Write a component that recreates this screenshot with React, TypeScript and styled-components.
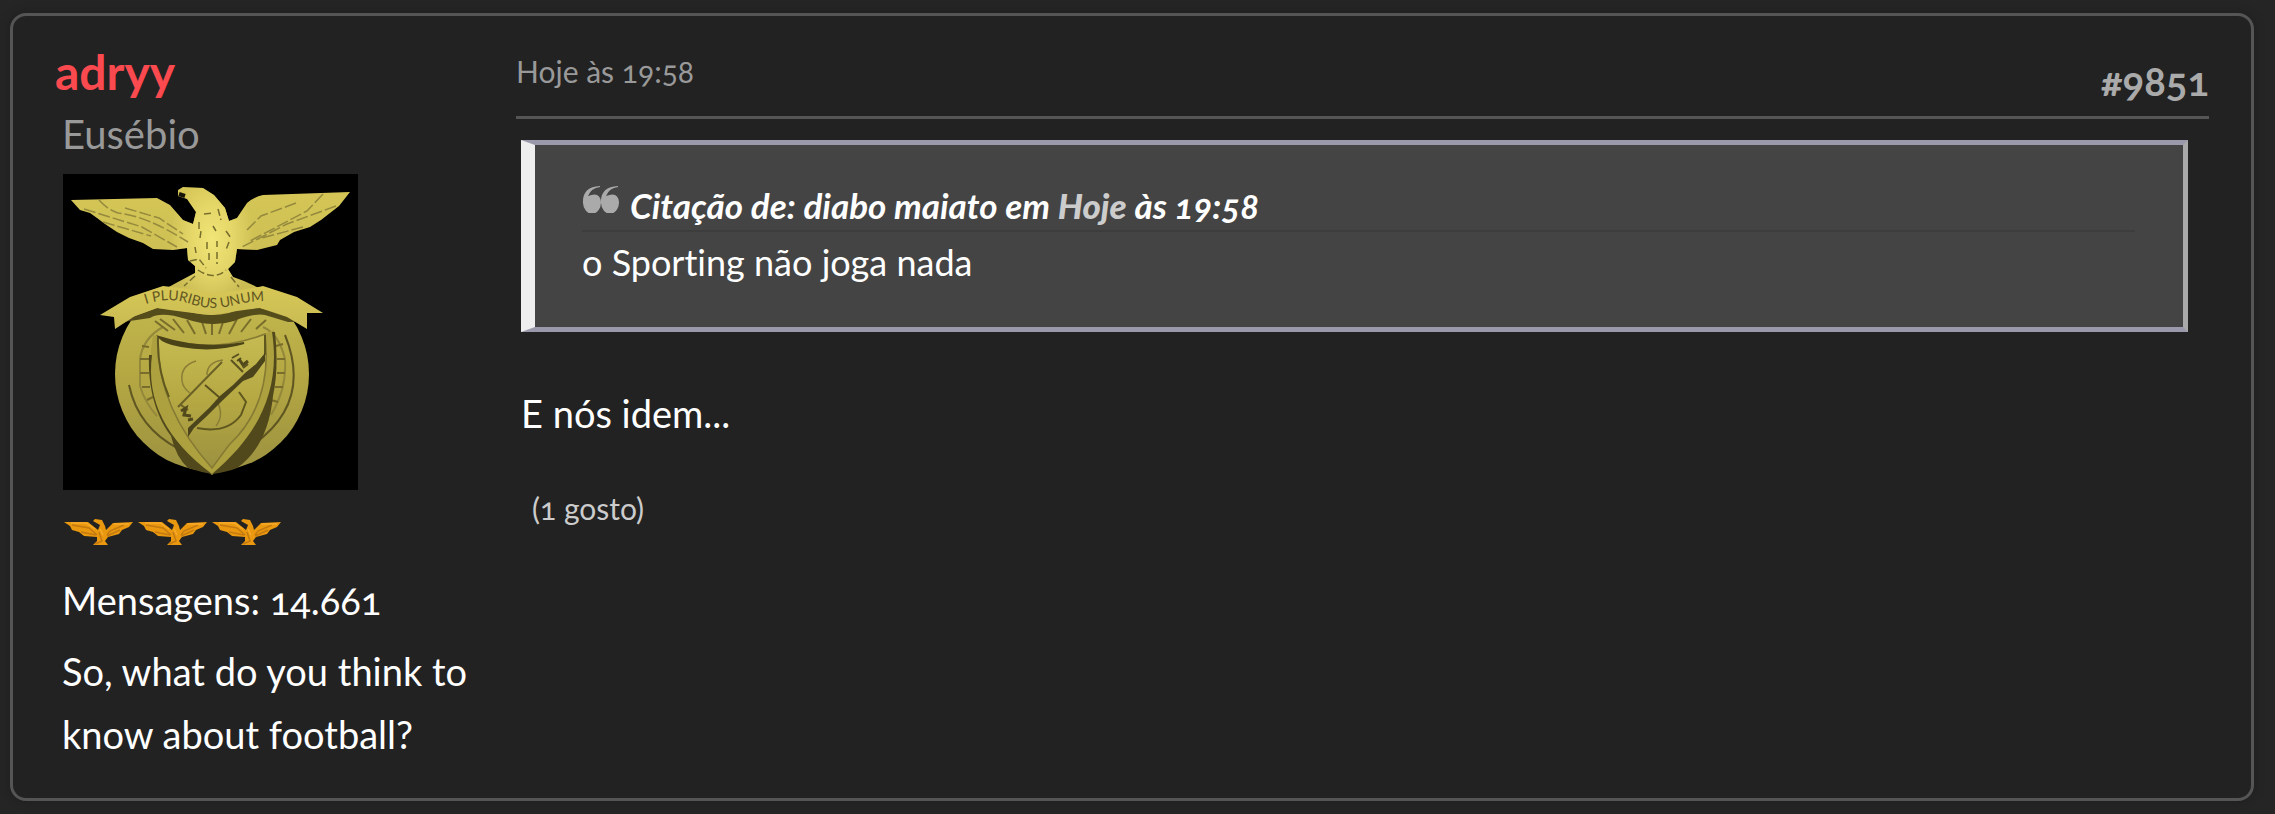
import React from 'react';
import styled, { createGlobalStyle } from 'styled-components';

const GlobalStyle = createGlobalStyle`
  * { box-sizing: border-box; }
  body {
    margin: 0;
    background: #252525;
    color: #fff;
    font-family: Lato, "Open Sans", sans-serif;
    font-variant-numeric: oldstyle-nums;
    font-variant-ligatures: none;
    font-size: 38px;
    line-height: 63px;
  }
  p, h2, h3, blockquote { margin: 0; }
  a { color: inherit; text-decoration: none; }
`;

const Post = styled.article`
  display: flex;
  min-height: 788px;
  margin: 13px 21px 13px 10px;
  padding: 24px 42px 30px;
  border: 3px solid #555;
  border-radius: 16px;
  background: #222;
  box-shadow: 0 0 12px rgba(0, 0, 0, 0.2);
`;

const Poster = styled.aside`
  flex: 0 0 461px;
`;

const PosterName = styled.h2`
  color: #fb4a4f;
  font-size: 48px;
  font-weight: 700;
  line-height: 64px;
`;

const PosterDetails = styled.div`
  padding-left: 7px;
`;

const Title = styled.p`
  color: #999;
  font-size: 40px;
  line-height: 60px;
`;

const Avatar = styled.svg`
  display: block;
  width: 295px;
  height: 316px;
  margin: 10px 0 0 1px;
  background: #000;
`;

const Rank = styled.div`
  display: flex;
  gap: 2px;
  margin: 28px 0 23px 1px;
`;

const RankIcon = styled.svg`
  width: 72px;
  height: 28px;
`;

const Blurb = styled.p`
  margin-top: 8px;
`;

const Content = styled.div`
  flex: 1;
  min-width: 0;
`;

const Header = styled.header`
  display: flex;
  justify-content: space-between;
  align-items: flex-start;
  height: 79px;
  border-bottom: 3px solid #555;
`;

const Posted = styled.a`
  color: #999;
  font-size: 30px;
  line-height: 62px;
`;

const PostNumber = styled.a`
  padding-top: 10px;
  color: #aaa;
  font-size: 40px;
  font-weight: 700;
`;

const Quote = styled.blockquote`
  margin: 21px 21px 0 5px;
  padding: 34px 48px 35px 47px;
  border-style: solid;
  border-width: 5px 5px 5px 14px;
  border-color: #9a99ab #a9a9a9 #9a99ab #eee;
  background: #444;
  font-size: 36px;
  line-height: 60px;
`;

const QuoteSource = styled.h3`
  display: flex;
  gap: 11px;
  height: 53px;
  border-bottom: 2px solid #3d3d3d;
  font-size: 35px;
  font-style: italic;
  font-weight: 700;
  line-height: 52px;
`;

const QuoteMark = styled.svg`
  width: 37px;
  height: 28px;
  margin-top: 6px;
  fill: #aaa;
`;

const Today = styled.strong`
  color: #ccc;
`;

const Body = styled.p`
  padding: 50px 5px 0;
`;

const Likes = styled.p`
  padding: 32px 16px 0;
  color: #ccc;
  font-size: 30px;
`;

const EagleCrest = () => (
  <Avatar viewBox="0 0 295 316" role="img" aria-label="Avatar de adryy">
    <defs>
      <linearGradient id="gold" x1="0" y1="0" x2="0" y2="1">
        <stop offset="0" stopColor="#d6c756" />
        <stop offset="1" stopColor="#c9bb53" />
      </linearGradient>
      <radialGradient id="breast" cx=".5" cy=".5" r=".5">
        <stop offset="0" stopColor="#f2e678" />
        <stop offset=".5" stopColor="#eadc6d" stopOpacity=".8" />
        <stop offset="1" stopColor="#eadc6d" stopOpacity="0" />
      </radialGradient>
      <linearGradient id="medal" x1="0" y1="0" x2="0" y2="1">
        <stop offset="0" stopColor="#c6bb52" />
        <stop offset=".5" stopColor="#b5a843" />
        <stop offset="1" stopColor="#9c9140" />
      </linearGradient>
      <clipPath id="eagle-outline">
        <path d="M8 26L94 24L107 31L120 46L130 50L133 38L124 25L115 22L115 16L120 13L140 14L151 21L162 34L166 47L174 44L184 29Q191 23 200 21L287 18L276 32L258 46L247 53L231 58L217 66L214 71L194 76L174 75L172 88L165 95L170 103L181 107L196 114L149 120L104 114L113 109L132 99L132 92L125 86L124 74L110 76L90 75L80 69L66 64L54 58L42 50L34 44L27 39L17 36Z" />
      </clipPath>
      <path id="motto" d="M75 133C115 117 125 134 150 134S185 121 232 131" />
    </defs>
    <circle cx="149" cy="200" r="97" fill="url(#medal)" />
    <g fill="none" stroke="#786d2b" strokeWidth="2">
      <path d="M66 211Q75 254 116 275M222 161Q250 230 188 272" stroke="#5f5621" />
      <path d="M100 153Q80 164 77 185V212Q82 229 94 242M200 153Q216 160 222 185Q224 215 208 241" stroke="#94883a" />
      <path d="M79 172L86 173M77 185H86M77 199H86M79 213H87M84 226L90 223M213 172L220 170M214 185H222M214 199H222M212 213H220M208 226L215 228" />
      <path d="M105 157L92 147M112 156L97 145M121 159L110 145M132 160L124 146M143 160L139 148M149 161V148M156 160L160 148M166 160L174 145M178 158L188 145M193 155L203 146" />
    </g>
    <path d="M90 161Q148 182 211 156Q222 249 149 301Q75 246 90 161Z" fill="#ada13f" />
    <path d="M86 181C85 208 90 238 108 262Q113 283 125 294Q137 298 149 300Q80 249 89 181Z" fill="#51491b" />
    <path d="M209 158C218 215 196 261 149 300Q164 298 174 294Q205 272 210 222Q216 194 212 158Z" fill="#51491b" />
    <path d="M95 163Q149 181 202 160Q210 230 166 271L149 294Q93 232 95 163Z" fill="url(#medal)" stroke="#857934" strokeWidth="1.5" />
    <path d="M96 163Q140 177 181 169Q150 178 118 172Q101 169 96 163Z" fill="#4b4318" stroke="#4b4318" strokeWidth="2" />
    <path d="M95 163Q94 196 106 223M202 161V181" fill="none" stroke="#60571f" strokeWidth="2" />
    <g fill="none" stroke="#8a7e36" strokeWidth="1.5">
      <path d="M133 187Q117 192 119 207Q120 214 127 219M160 186Q144 188 144 201M153 226Q162 240 153 252" />
      <path d="M115 233L159 188M125 236L118 231" stroke="#6b6127" strokeWidth="2" />
      <path d="M142 211L157 224L163 219M168 186L180 198M169 184L176 180M174 187L178 184M180 194L185 190" stroke="#5b521f" strokeWidth="2" />
      <path d="M134 254Q164 260 178 241L183 228L176 218" stroke="#60571f" strokeWidth="2" />
    </g>
    <path d="M125 263L125 254L146 234L157 222L170 211L182 199L193 190L202 179L202 187L190 203L180 207L160 226L144 242L131 254Z" fill="#4c441b" />
    <path d="M118 237L123 234L121 241L128 242M125 246L130 245M176 185L180 191L185 187" stroke="#51491c" strokeWidth="3" fill="none" />
    <g clipPath="url(#eagle-outline)">
      <rect width="295" height="122" fill="url(#gold)" />
      <ellipse cx="149" cy="66" rx="42" ry="66" fill="url(#breast)" />
    </g>
    <g fill="none" stroke="#958a3d" strokeWidth="1.5">
      <path d="M36 26Q45 36 55 39Q84 42 125 68M62 34L96 44L120 60M21 35L79 53L114 73M40 48L88 62" strokeDasharray="12 3" />
      <path d="M260 20L244 37L185 68M233 29L198 42L184 56M273 32L224 50L179 73M240 53L195 65" strokeDasharray="12 3" />
      <path d="M136 48V55M141 40L149 39M155 35L158 46M150 52L153 57M144 68V75M154 67V73M137 64L138 57M163 57L168 64M166 68L163 76M132 73L133 79M146 79V89M154 78V90M127 87L136 85L143 94M135 96Q151 107 163 96M132 102L121 112M168 103L176 113" stroke="#776d2d" strokeDasharray="7 3" />
      <path d="M116 20L122 22" stroke="#171407" strokeWidth="4" />
    </g>
    <path d="M60 148L72 142L94 134Q119 136 131 139Q149 143 166 139Q187 132 197 134L230 142L240 148L225 148L202 141Q191 139 171 147Q149 154 123 145Q98 137 87 144Z" fill="#554c1c" />
    <path d="M37 141L67 123L100 112Q124 114 149 119Q176 117 200 112L234 123L260 139L244 139V155L224 143L197 134Q176 136 149 141Q119 138 94 134L72 142L52 155L51 143Z" fill="url(#gold)" />
    <text fill="#61561f" fontSize="14"><textPath href="#motto" startOffset="8">I PLURIBUS UNUM</textPath></text>
  </Avatar>
);

const RankEagle = () => (
  <RankIcon viewBox="0 0 70 28" aria-hidden="true">
    <path d="M0 4L24 4L34 12L36 7L29 3L31 1L38 2L41 8L42 12L49 5L69 4L65 9L58 12L55 16L44 19L41 23L44 27H29L33 23V19L20 18L15 14L8 12L6 8Z" fill="#e9980f" />
    <path d="M8 7L25 10L33 17M17 14L32 17M60 7L46 13L43 17M56 12L43 18M35 14L38 23L31 26" fill="none" stroke="#c47a10" strokeWidth="1.5" />
    <path d="M7 5H22L31 11M50 6H65M36 11L39 17" fill="none" stroke="#f7ab2a" strokeWidth="1.5" />
  </RankIcon>
);

export default function App() {
  return (
    <>
      <GlobalStyle />
      <Post>
        <Poster>
          <PosterName><a href="#adryy">adryy</a></PosterName>
          <PosterDetails>
            <Title>Eusébio</Title>
            <EagleCrest />
            <Rank>
              <RankEagle />
              <RankEagle />
              <RankEagle />
            </Rank>
            <p>Mensagens: 14.661</p>
            <Blurb>So, what do you think to know about football?</Blurb>
          </PosterDetails>
        </Poster>
        <Content>
          <Header>
            <Posted href="#msg9851">Hoje às 19:58</Posted>
            <PostNumber href="#msg9851">#9851</PostNumber>
          </Header>
          <Quote>
            <QuoteSource>
              <QuoteMark viewBox="0 0 37 28" aria-hidden="true">
                <path d="M18 1V2Q9 3 6 11Q18 6 19 17A8 10 0 0 1 1 18Q0 2 18 1Z" />
                <path d="M36 1V2Q27 3 24 11Q36 6 37 17A8 10 0 0 1 19 18Q18 2 36 1Z" />
              </QuoteMark>
              <a href="#msg9850">Citação de: diabo maiato em <Today>Hoje</Today> às 19:58</a>
            </QuoteSource>
            <p>o Sporting não joga nada</p>
          </Quote>
          <Body>E nós idem...</Body>
          <Likes>(1 gosto)</Likes>
        </Content>
      </Post>
    </>
  );
}
